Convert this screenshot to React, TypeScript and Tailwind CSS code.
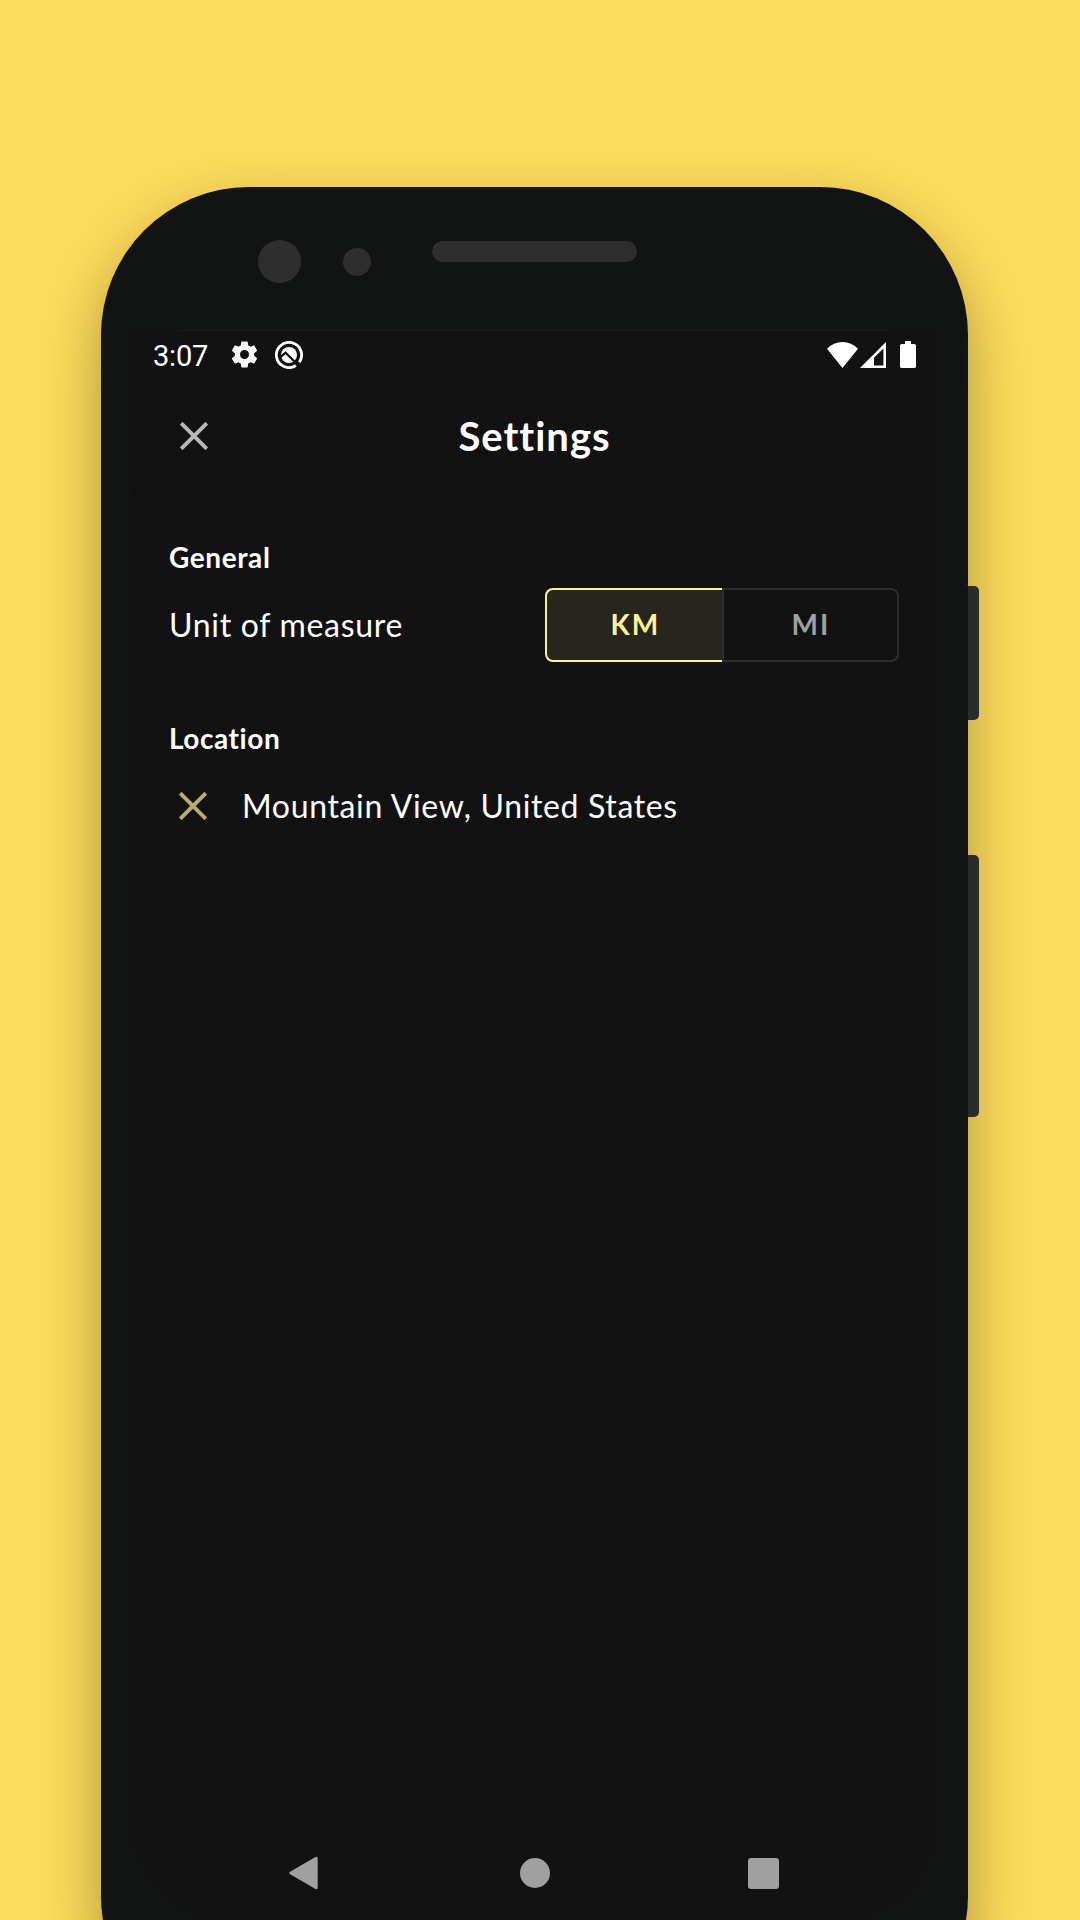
import React from "react";

function CloseIcon({ className }: { className: string }) {
  return (
    <svg viewBox="0 0 28 28" className={className} fill="none" stroke="currentColor" strokeWidth="3.9">
      <path d="M1.200 1.200 26.800 26.800M26.800 1.200 1.200 26.800" />
    </svg>
  );
}

function GearIcon() {
  return (
    <svg viewBox="0 0 24 24" className="ml-[20px] size-[31px]" fill="currentColor">
      <path d="M19.43 12.98c.04-.32.07-.64.07-.98s-.03-.66-.07-.98l2.11-1.65c.19-.15.24-.42.12-.64l-2-3.46c-.12-.22-.39-.3-.61-.22l-2.49 1c-.52-.4-1.08-.73-1.69-.98l-.38-2.65C14.46 2.18 14.25 2 14 2h-4c-.25 0-.46.18-.49.42l-.38 2.65c-.61.25-1.17.59-1.69.98l-2.49-1c-.23-.09-.49 0-.61.22l-2 3.46c-.13.22-.07.49.12.64l2.11 1.65c-.04.32-.07.65-.07.98s.03.66.07.98l-2.11 1.65c-.19.15-.24.42-.12.64l2 3.46c.12.22.39.3.61.22l2.49-1c.52.4 1.08.73 1.69.98l.38 2.65c.03.24.24.42.49.42h4c.25 0 .46-.18.49-.42l.38-2.65c.61-.25 1.17-.59 1.69-.98l2.49 1c.23.09.49 0 .61-.22l2-3.46c.12-.22.07-.49-.12-.64l-2.11-1.65zM12 15.5c-1.93 0-3.5-1.57-3.5-3.5s1.57-3.5 3.5-3.5 3.5 1.57 3.5 3.5-1.57 3.5-3.5 3.5z" />
    </svg>
  );
}

function QIcon() {
  return (
    <svg viewBox="0 0 28 28" className="ml-[15px] size-[28px]" fill="none">
      <path d="M20.9 24.5A12.6 12.6 0 1 1 24.300 21.200" stroke="currentColor" strokeWidth="2.800" />
      <circle cx="14" cy="14" r="8" fill="currentColor" />
      <path d="M5.500 16 10.600 11.700 22.500 23.500" stroke="#121212" strokeWidth="2.300" />
    </svg>
  );
}

function StatusBar() {
  return (
    <div className="flex h-[47px] items-center pl-[21px] pr-[21px] text-white">
      <span className="w-[56px] pt-[3px] font-['Roboto'] text-[29px] leading-[44px] tracking-[-0.200px]">3:07</span>
      <GearIcon />
      <QIcon />
      <div className="ml-auto flex items-center">
        <svg viewBox="0 0 31 26" className="h-[26px] w-[31px]" fill="currentColor">
          <path d="M0 6.8Q6.5 0 15.5 0T31 6.8L15.5 26Z" />
        </svg>
        <svg viewBox="0 0 26 26" className="ml-[2px] size-[26px]" fill="currentColor" fillRule="evenodd">
          <path d="M26 0V26H0ZM23.4 6.6 14 15.8V23.4H23.4Z" />
        </svg>
        <svg viewBox="0 0 16 27" className="ml-[14px] h-[27px] w-[16px]" fill="currentColor">
          <path d="M5 0h6v3h3.4q1.6 0 1.6 1.6v20.8q0 1.6-1.6 1.6H1.600q-1.6 0-1.6-1.6V4.600q0-1.600 1.600-1.600H5Z" />
        </svg>
      </div>
    </div>
  );
}

function UnitToggle() {
  return (
    <div className="flex h-[74px] w-[354px] text-[28px] font-bold leading-[68px] tracking-[2.200px]">
      <button className="w-[177px] rounded-l-[8px] border-2 border-r-0 border-[#fff294] bg-[#26251e] pb-[2px] pl-[2px] text-[#fff294]">KM</button>
      <button className="w-[177px] rounded-r-[8px] border-2 border-[#2d2d2d] pb-[2px] pl-[1px] text-[#a0a0a0]">MI</button>
    </div>
  );
}

function NavigationBar() {
  return (
    <div className="flex h-[34px] items-center text-[#a0a0a0]">
      <svg viewBox="0 0 29 34" className="ml-[157px] h-[34px] w-[29px]" fill="currentColor" stroke="currentColor" strokeWidth="3" strokeLinejoin="round">
        <path d="M1.900 17 27.200 2.200V31.800Z" />
      </svg>
      <div className="ml-[201.500px] size-[30px] rounded-full bg-[#a0a0a0]" />
      <div className="ml-[198.500px] size-[31px] rounded-[3px] bg-[#a0a0a0]" />
    </div>
  );
}

export default function App() {
  return (
    <div className="h-[1920px] w-[1080px] overflow-hidden bg-[#fddb5b] pl-[101px] pt-[187px] font-['Lato',sans-serif] text-white">
      <div className="relative h-[1857px] w-[867px] rounded-[148px] bg-[#111412] shadow-[0_24px_60px_rgba(0,0,0,0.32)]">
        <div className="absolute left-full top-[399px] h-[134px] w-[11px] rounded-r-[5px] bg-[#2a2c2b]" />
        <div className="absolute left-full top-[668px] h-[262px] w-[11px] rounded-r-[5px] bg-[#2a2c2b]" />

        <div className="flex h-[143px] items-start pl-[157px] pt-[53px]">
          <div className="size-[43px] rounded-full bg-[#2e2e2e]" />
          <div className="ml-[42px] mt-[8px] size-[28px] rounded-full bg-[#2e2e2e]" />
          <div className="ml-[61px] mt-[1px] h-[21px] w-[205px] rounded-full bg-[#2e2e2e]" />
        </div>

        <div className="mx-[31px] flex h-[1590px] flex-col rounded-b-[100px] bg-[#121212]">
          <div className="mx-[46px] h-px shrink-0 bg-[#191a19]" />
          <StatusBar />
          <header className="grid h-[117px] grid-cols-[120px_1fr_120px] items-center pb-[2px]">
            <CloseIcon className="ml-[47.500px] size-[28px] text-[#b8b8b8]" />
            <h1 className="text-center text-[40px] font-bold leading-[48px] tracking-[1px]">Settings</h1>
          </header>
          <div className="h-px shrink-0 bg-[#0f0f0f]" />
          <main className="flex-1 pl-[37px] pr-[38px] pt-[43px]">
            <h2 className="h-[49px] text-[28px] font-bold leading-[36px] tracking-[0.600px]">General</h2>
            <div className="flex h-[74px] items-center justify-between">
              <span className="text-[32px] leading-[40px] tracking-[0.700px]">Unit of measure</span>
              <UnitToggle />
            </div>
            <h2 className="mt-[58px] h-[37px] text-[28px] font-bold leading-[36px] tracking-[0.550px]">Location</h2>
            <div className="mt-[29px] flex h-[40px] items-center">
              <CloseIcon className="ml-[10px] size-[28px] text-[#b7ad6d]" />
              <span className="ml-[35px] text-[32px] leading-[40px] tracking-[0.650px]">Mountain View, United States</span>
            </div>
          </main>
          <div className="pb-[30px]">
            <NavigationBar />
          </div>
        </div>
      </div>
    </div>
  );
}
